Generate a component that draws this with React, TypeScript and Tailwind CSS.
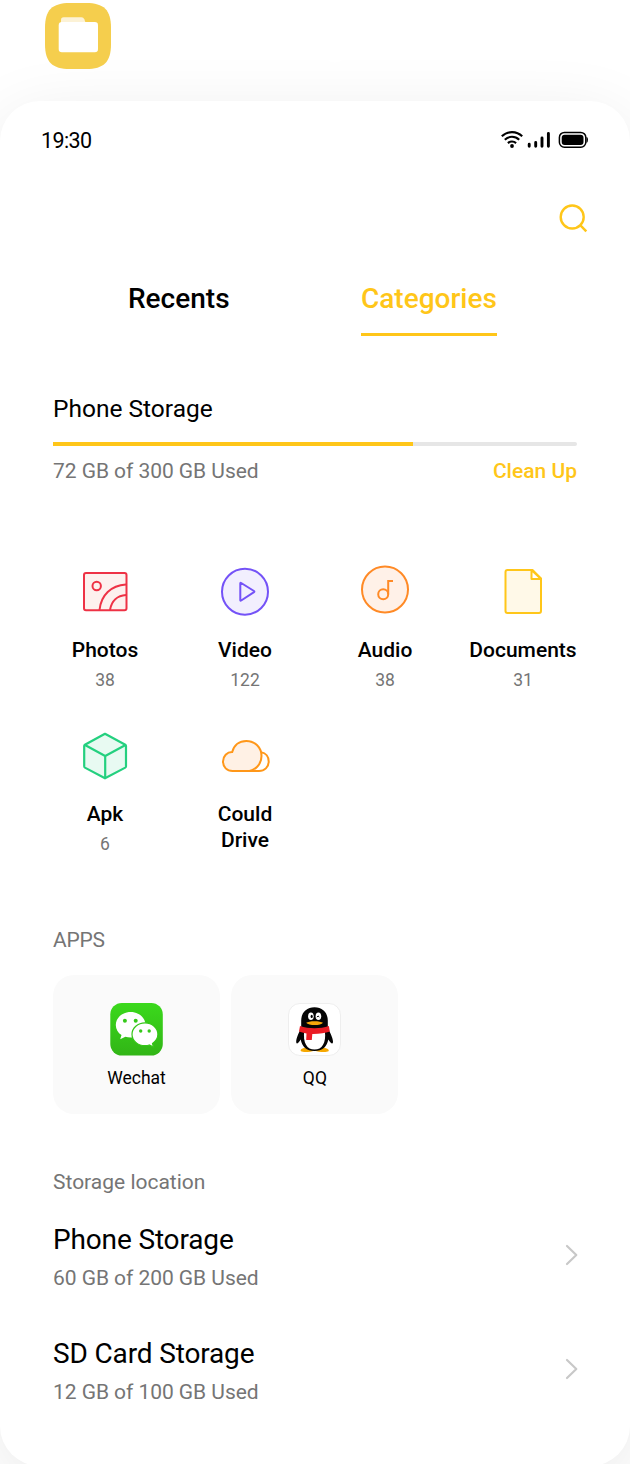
import type { ReactNode } from "react";

function FolderLogo() {
  return (
    <svg width="66" height="66" viewBox="0 0 66 66">
      <path d="M0 25C0 7 7 0 25 0H41C59 0 66 7 66 25V41C66 59 59 66 41 66H25C7 66 0 59 0 41Z" fill="#f5ce4d" />
      <path d="M16 24V17Q16 14.300 18.600 14.300H36.500Q38.500 14.300 39.300 16.200L41 21Z" fill="#fcf2d6" />
      <rect x="13.700" y="19" width="39.300" height="30.200" rx="3.200" fill="#fff" />
    </svg>
  );
}

function StatusIcons() {
  return (
    <svg width="88" height="20" viewBox="0 0 88 20" fill="none" stroke="#000">
      <g strokeWidth="2.100">
        <path d="M1.800 6.300C7.400 .7 16.600 .7 22.200 6.300" />
        <path d="M4.800 9.800C9 5.800 15 5.800 19.200 9.800" />
        <path d="M7.900 13.100C10.300 11 13.700 11 16.100 13.100" />
      </g>
      <circle cx="12" cy="16" r="1.900" fill="#000" stroke="none" />
      <g strokeWidth="2.900" strokeLinecap="round">
        <path d="M29.200 14.300V16.300M35.700 12.400V16.300M42 8V16.300M48.400 3.500V16.300" />
      </g>
      <rect x="59.400" y="2.400" width="26.400" height="14.800" rx="5" strokeWidth="1.500" />
      <rect x="61.700" y="4.700" width="21.800" height="10.300" rx="3" fill="#000" stroke="none" />
      <path d="M86.500 6.800Q88 7.300 88 9.800T86.500 12.900Z" fill="#000" stroke="none" />
    </svg>
  );
}

function PhotosIcon() {
  return (
    <svg width="56" height="56" viewBox="0 0 56 56" fill="none" stroke="#ee3245" strokeWidth="2">
      <rect x="7" y="9" width="42.500" height="37.300" rx="2" fill="#fdf1ee" />
      <circle cx="19.700" cy="22" r="4.200" />
      <path d="M22.500 46C24 31 34 21.500 49 20.500M33 46C34.500 37 40.500 31.500 49 31" />
    </svg>
  );
}

function VideoIcon() {
  return (
    <svg width="56" height="56" viewBox="0 0 56 56" fill="#f2effe" stroke="#7452f7" strokeWidth="2" strokeLinejoin="round">
      <circle cx="28" cy="27.700" r="23" />
      <path d="M23.300 19.500Q23.300 18.500 24.200 19L37 27Q37.800 27.600 37 28.200L24.200 36.500Q23.300 37 23.300 36Z" />
    </svg>
  );
}

function AudioIcon() {
  return (
    <svg width="56" height="56" viewBox="0 0 56 56" fill="#fff1e8" stroke="#ff8a26" strokeWidth="2">
      <circle cx="28" cy="25.500" r="23" />
      <circle cx="26.200" cy="30.300" r="5" />
      <path d="M31.200 30.300V17H36" fill="none" />
    </svg>
  );
}

function DocumentIcon() {
  return (
    <svg width="56" height="56" viewBox="0 0 56 56" fill="#fff9e8" stroke="#ffc619" strokeWidth="2" strokeLinejoin="round">
      <path d="M12.500 6H37.500L46 14.500V47Q46 49 44 49H12.500Q10.500 49 10.500 47V8Q10.500 6 12.500 6Z" />
      <path d="M36.500 6V15H46Z" fill="#fff" />
    </svg>
  );
}

function CubeIcon() {
  return (
    <svg width="56" height="56" viewBox="0 0 56 56" fill="#e8faf2" stroke="#24d07f" strokeWidth="2.200" strokeLinejoin="round">
      <path d="M28 5.800L48.300 16.800Q49 17.200 49 18V38.300Q49 39.200 48.300 39.600L28 50.300L7.900 39.600Q7.200 39.200 7.200 38.300V18Q7.200 17.200 7.900 16.800Z" />
      <path d="M8 17L28.200 28L48.500 17M28.200 28V50" fill="none" />
    </svg>
  );
}

function CloudIcon() {
  return (
    <svg width="56" height="56" viewBox="0 0 56 56" fill="none" stroke="#ff9719" strokeWidth="2">
      <path d="M44 24.300C49 25 51.700 29 51.700 33.500C51.700 39 47.500 43.100 42 43.100H30" />
      <path d="M15.500 43.100C10 43.100 6 39 6 33.500C6 28 10 24 15.200 24.100C17 17 22.500 12.900 29.300 12.900C38 12.900 44.500 19.500 44.500 28C44.500 36.500 38 43.100 29.500 43.100Z" fill="#fff1e5" />
    </svg>
  );
}

function WechatLogo() {
  return (
    <svg width="53" height="53" viewBox="0 0 53 53">
      <defs>
        <linearGradient id="wechat" x1="0" y1="0" x2="0" y2="1">
          <stop stopColor="#3bd91c" />
          <stop offset="1" stopColor="#31b516" />
        </linearGradient>
      </defs>
      <rect x=".3" width="52.500" height="52.500" rx="11.500" fill="url(#wechat)" />
      <path d="M20.700 9C12.300 9 5.800 14.800 5.800 21.900C5.800 26 8 29.700 11.500 32L10.200 36.300L15.400 33.800C17 34.300 18.800 34.600 20.700 34.600C29 34.600 35.500 28.900 35.500 21.900S29 9 20.700 9Z" fill="#fff" />
      <path d="M35 19.800C27.800 19.800 22 25 22 31.300S27.800 42.700 35 42.700C36.500 42.700 38 42.500 39.300 42L43.500 44L42.500 40.400C45.800 38.300 47.900 35 47.900 31.300C47.900 25 42.200 19.800 35 19.800Z" fill="#fff" stroke="#35c718" strokeWidth="1.200" />
      <g fill="#35c91a">
        <circle cx="14.900" cy="17.700" r="2" />
        <circle cx="25.700" cy="17.700" r="2" />
        <circle cx="30.700" cy="28" r="1.700" />
        <circle cx="39.200" cy="28" r="1.700" />
      </g>
    </svg>
  );
}

function QQLogo() {
  return (
    <svg width="53" height="53" viewBox="0 0 53 53">
      <rect x=".5" y=".5" width="52" height="52" rx="11.500" fill="#fff" stroke="#eeeeee" />
      <path d="M13 48.300C11.500 46.500 15 44.500 20 44.300L26.500 45.500L33 44.300C38 44.500 42 46.500 40.500 48.300C38.500 49.500 31 49.300 26.500 47.500C22 49.300 15 49.500 13 48.300Z" fill="#f6a800" />
      <path d="M26.500 4.300C18.500 4.300 13.200 9.800 13.200 17.500V25C11.500 28.500 8.300 34.500 8.200 38.500C8.200 41.500 9.800 41 12.700 36.500C14 43.500 18.500 48 26.500 48S39 43.500 40.300 36.500C43.200 41 45 41.500 45 38.500C44.900 34.500 41.500 28.500 39.800 25V17.500C39.800 9.800 34.500 4.300 26.500 4.300Z" fill="#050505" />
      <path d="M16.200 28H36.900C38.300 40 34 46.600 26.500 46.600S14.800 40 16.200 28Z" fill="#fff" />
      <ellipse cx="22.900" cy="13.200" rx="2.800" ry="3.800" fill="#fff" />
      <ellipse cx="30.400" cy="13.200" rx="2.800" ry="3.800" fill="#fff" />
      <ellipse cx="23.700" cy="13.400" rx="1.100" ry="1.600" />
      <path d="M29 14.200Q30 11.800 31.300 14" fill="none" stroke="#000" strokeWidth="1" />
      <path d="M18.200 19.700C20.500 17.600 32.500 17.600 35 19.700C33 22.800 20.500 22.800 18.200 19.700Z" fill="#f7a60a" />
      <path d="M12 23C21 26 32 26 40.900 23L41.800 28.500C37.500 30 31 31 24.300 30.900L23.800 37H18.200L18.500 30.400C15.500 30 13 29.300 11 28.500Z" fill="#ea1c24" />
    </svg>
  );
}

type Category = { name: ReactNode; count?: string; icon: ReactNode };

const categories: Category[] = [
  { name: "Photos", count: "38", icon: <PhotosIcon /> },
  { name: "Video", count: "122", icon: <VideoIcon /> },
  { name: "Audio", count: "38", icon: <AudioIcon /> },
  { name: "Documents", count: "31", icon: <DocumentIcon /> },
  { name: "Apk", count: "6", icon: <CubeIcon /> },
  { name: <>Could<br />Drive</>, icon: <CloudIcon /> },
];

function AppCard({ name, children }: { name: string; children: ReactNode }) {
  return (
    <div className="flex h-[139px] w-[167px] flex-col items-center rounded-[21px] bg-[#fafafa] pt-[27.500px]">
      {children}
      <span className="mt-[11.500px] text-[17.500px] leading-[22px]">{name}</span>
    </div>
  );
}

function StorageRow({ name, usage }: { name: string; usage: string }) {
  return (
    <div className="flex h-[66px] items-start justify-between">
      <div>
        <div className="text-[28px] leading-[34px] tracking-[-0.15px]">{name}</div>
        <div className="mt-[8px] text-[21px] leading-[26px] tracking-[-0.05px] text-[#757575]">{usage}</div>
      </div>
      <svg className="mt-[21px] mr-[-1px]" width="14" height="22" viewBox="0 0 14 22" fill="none" stroke="#c8c8c8" strokeWidth="2.200" strokeLinecap="round" strokeLinejoin="round">
        <path d="M3 2L12.300 11L3 20" />
      </svg>
    </div>
  );
}

export default function App() {
  return (
    <div className="h-[1464px] w-[630px] overflow-hidden bg-white font-['Roboto',sans-serif] text-black">
      <header className="flex h-[101px] items-start pt-[3px] pl-[45px]">
        <FolderLogo />
        <h1 className="mt-[12px] ml-[30px] text-[42px] leading-[50px] font-medium text-white">File Manager</h1>
      </header>

      <main className="h-[1365px] rounded-[40px] bg-white shadow-[0_17px_70px_rgba(0,0,0,0.09)]">
        <div className="flex h-[78px] items-center justify-between pr-[42px] pl-[41px]">
          <span className="pt-[2px] text-[21.500px] leading-[26px] tracking-[-0.6px]">19:30</span>
          <StatusIcons />
        </div>

        <div className="flex h-[78px] items-center justify-end pr-[42px]">
          <svg width="30" height="30" viewBox="0 0 30 30" fill="none" stroke="#ffc619" strokeWidth="2.400">
            <circle cx="14.200" cy="14" r="11.500" />
            <path d="M22.200 22.100L28.300 28.300" />
          </svg>
        </div>

        <nav className="flex h-[80px] items-start pt-[25px] pl-[128px] text-[28px] leading-[34px] font-medium">
          <span className="w-[233px]">Recents</span>
          <div className="text-[#ffc619]">
            Categories
            <div className="mt-[17px] h-[2.500px] bg-[#ffc619]" />
          </div>
        </nav>

        <section className="h-[227px] px-[53px] pt-[57px]">
          <h2 className="text-[24.500px] leading-[30px] font-normal">Phone Storage</h2>
          <div className="mt-[18px] h-[3.500px] overflow-hidden rounded-r-full bg-[#e6e6e6]">
            <div className="h-full w-[360px] bg-[#ffc619]" />
          </div>
          <div className="mt-[12.500px] flex justify-between text-[21px] leading-[26px]">
            <span className="tracking-[-0.05px] text-[#757575]">72 GB of 300 GB Used</span>
            <span className="font-medium text-[#ffc619]">Clean Up</span>
          </div>
        </section>

        <section className="grid h-[351px] auto-rows-[164px] grid-cols-[140px_140px_140px_136px] pl-[35px]">
          {categories.map((item, i) => (
            <div key={i} className="flex flex-col items-center">
              {item.icon}
              <div className="mt-[17px] text-center text-[21px] leading-[26px] font-medium whitespace-nowrap">{item.name}</div>
              {item.count && <div className="mt-[7px] text-[17.500px] leading-[21px] text-[#757575]">{item.count}</div>}
            </div>
          ))}
        </section>

        <section className="px-[53px] pt-[12px]">
          <h3 className="text-[21px] leading-[26px] font-normal tracking-[-0.2px] text-[#757575]">APPS</h3>
          <div className="mt-[22px] flex gap-[11.400px]">
            <AppCard name="Wechat"><WechatLogo /></AppCard>
            <AppCard name="QQ"><QQLogo /></AppCard>
          </div>
        </section>

        <section className="px-[53px] pt-[55px]">
          <h3 className="text-[21px] leading-[26px] font-normal text-[#757575]">Storage location</h3>
          <div className="mt-[28px] flex flex-col gap-[48px]">
            <StorageRow name="Phone Storage" usage="60 GB of 200 GB Used" />
            <StorageRow name="SD Card Storage" usage="12 GB of 100 GB Used" />
          </div>
        </section>
      </main>
    </div>
  );
}
